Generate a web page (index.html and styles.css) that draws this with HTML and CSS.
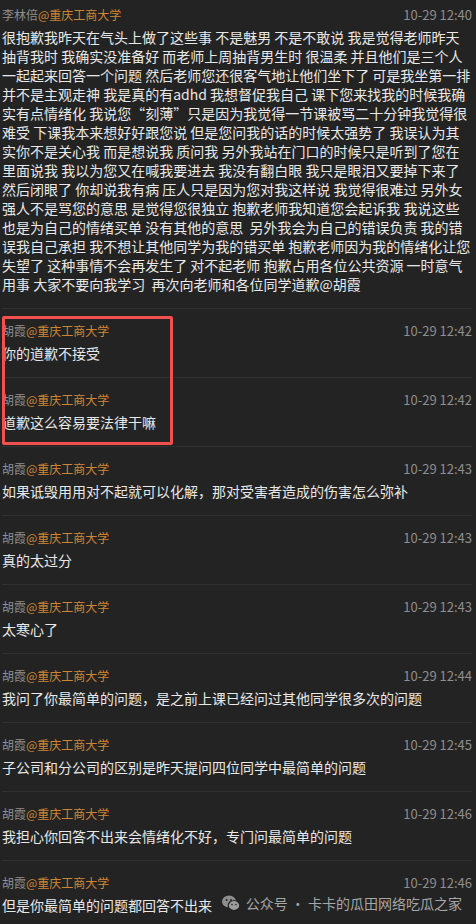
FILE: index.html
```html
<!DOCTYPE html>
<html lang="zh-CN">
<head>
  <meta charset="UTF-8" />
  <meta name="viewport" content="width=device-width, initial-scale=1.0"/>
  <title>评论</title>
  <link rel="stylesheet" href="styles.css">
</head>
<body>
  <div class="feed">
    <!-- first comment -->
    <div class="item first">
      <div class="meta">
        <span class="user">李林倍<span class="school">@重庆工商大学</span></span>
        <span class="time">10-29 12:40</span>
      </div>
      <p class="msg long">很抱歉我昨天在气头上做了这些事 不是魅男 不是不敢说 我是觉得老师昨天<br>抽背我时 我确实没准备好 而老师上周抽背男生时 很温柔 并且他们是三个人<br>一起起来回答一个问题 然后老师您还很客气地让他们坐下了 可是我坐第一排<br>并不是主观走神 我是真的有adhd 我想督促我自己 课下您来找我的时候我确<br>实有点情绪化 我说您“刻薄”只是因为我觉得一节课被骂二十分钟我觉得很<br>难受 下课我本来想好好跟您说 但是您问我的话的时候太强势了 我误认为其<br>实你不是关心我 而是想说我 质问我 另外我站在门口的时候只是听到了您在<br>里面说我 我以为您又在喊我要进去 我没有翻白眼 我只是眼泪又要掉下来了<br>然后闭眼了 你却说我有病 压人只是因为您对我这样说 我觉得很难过 另外女<br>强人不是骂您的意思 是觉得您很独立 抱歉老师我知道您会起诉我 我说这些<br>也是为自己的情绪买单 没有其他的意思&nbsp; 另外我会为自己的错误负责 我的错<br>误我自己承担 我不想让其他同学为我的错买单 抱歉老师因为我的情绪化让您<br>失望了 这种事情不会再发生了 对不起老师 抱歉占用各位公共资源 一时意气<br>用事 大家不要向我学习&nbsp; 再次向老师和各位同学道歉@胡霞</p>
    </div>

    <!-- marked replies -->
    <div class="marked">
      <div class="item">
        <div class="meta">
          <span class="user">胡霞<span class="school">@重庆工商大学</span></span>
          <span class="time">10-29 12:42</span>
        </div>
        <p class="msg">你的道歉不接受</p>
      </div>
      <div class="item">
        <div class="meta">
          <span class="user">胡霞<span class="school">@重庆工商大学</span></span>
          <span class="time">10-29 12:42</span>
        </div>
        <p class="msg">道歉这么容易要法律干嘛</p>
      </div>
      <div class="red-box"></div>
    </div>

    <div class="item">
      <div class="meta">
        <span class="user">胡霞<span class="school">@重庆工商大学</span></span>
        <span class="time">10-29 12:43</span>
      </div>
      <p class="msg">如果诋毁用用对不起就可以化解，那对受害者造成的伤害怎么弥补</p>
    </div>
    <div class="item">
      <div class="meta">
        <span class="user">胡霞<span class="school">@重庆工商大学</span></span>
        <span class="time">10-29 12:43</span>
      </div>
      <p class="msg">真的太过分</p>
    </div>
    <div class="item">
      <div class="meta">
        <span class="user">胡霞<span class="school">@重庆工商大学</span></span>
        <span class="time">10-29 12:43</span>
      </div>
      <p class="msg">太寒心了</p>
    </div>
    <div class="item">
      <div class="meta">
        <span class="user">胡霞<span class="school">@重庆工商大学</span></span>
        <span class="time">10-29 12:44</span>
      </div>
      <p class="msg">我问了你最简单的问题，是之前上课已经问过其他同学很多次的问题</p>
    </div>
    <div class="item">
      <div class="meta">
        <span class="user">胡霞<span class="school">@重庆工商大学</span></span>
        <span class="time">10-29 12:45</span>
      </div>
      <p class="msg">子公司和分公司的区别是昨天提问四位同学中最简单的问题</p>
    </div>
    <div class="item">
      <div class="meta">
        <span class="user">胡霞<span class="school">@重庆工商大学</span></span>
        <span class="time">10-29 12:46</span>
      </div>
      <p class="msg">我担心你回答不出来会情绪化不好，专门问最简单的问题</p>
    </div>
    <div class="item">
      <div class="meta">
        <span class="user">胡霞<span class="school">@重庆工商大学</span></span>
        <span class="time">10-29 12:46</span>
      </div>
      <p class="msg">但是你最简单的问题都回答不出来</p>
    </div>
  </div>

  <!-- watermark -->
  <div class="watermark">
    <svg class="wx-icon" width="18" height="16" viewBox="0 0 18 16">
      <ellipse cx="7" cy="6.5" rx="7" ry="6" fill="#8e8e8e"/>
      <ellipse cx="12" cy="10.5" rx="5.8" ry="5" fill="#9c9c9c" stroke="#232323" stroke-width="1.2"/>
      <circle cx="4.6" cy="5" r="1" fill="#232323"/>
      <circle cx="9" cy="5" r="1" fill="#232323"/>
      <circle cx="10" cy="9.6" r="0.8" fill="#232323"/>
      <circle cx="14" cy="9.6" r="0.8" fill="#232323"/>
    </svg>
    <span>公众号 · 卡卡的瓜田网络吃瓜之家</span>
  </div>
</body>
</html>
```

FILE: styles.css
```css
html, body {
  margin: 0;
  padding: 0;
}

body {
  width: 476px;
  height: 924px;
  overflow: hidden;
  position: relative;
  background-color: #232323;
  color: #e6e6e6;
  font-family: "Noto Sans CJK SC", "Noto Sans", sans-serif;
}

.feed {
  padding: 0 4px 0 2px;
}

.item {
  padding: 14px 0 14px;
  border-bottom: 1px solid #303030;
}

.item.first {
  padding-top: 7px;
}

.meta {
  display: flex;
  justify-content: space-between;
  align-items: center;
  height: 16px;
  line-height: 16px;
}

.user {
  font-size: 12px;
  color: #8e8e8e;
}

.school {
  color: #cf8634;
}

.time {
  font-size: 13px;
  color: #8e8e8e;
}

.msg {
  margin: 5px 0 0;
  font-size: 14px;
  line-height: 19px;
  color: #e8e8e8;
}

.msg.long {
  white-space: nowrap;
}

.marked {
  position: relative;
}

.red-box {
  position: absolute;
  left: 0;
  top: 7px;
  width: 171px;
  height: 129px;
  box-sizing: border-box;
  border: 3px solid #f24f4f;
  border-radius: 2px;
  pointer-events: none;
}

.watermark {
  position: absolute;
  right: 14px;
  bottom: 11px;
  display: flex;
  align-items: center;
  gap: 6px;
  font-size: 14px;
  color: #a6a6a6;
}

.wx-icon {
  display: block;
}
```
